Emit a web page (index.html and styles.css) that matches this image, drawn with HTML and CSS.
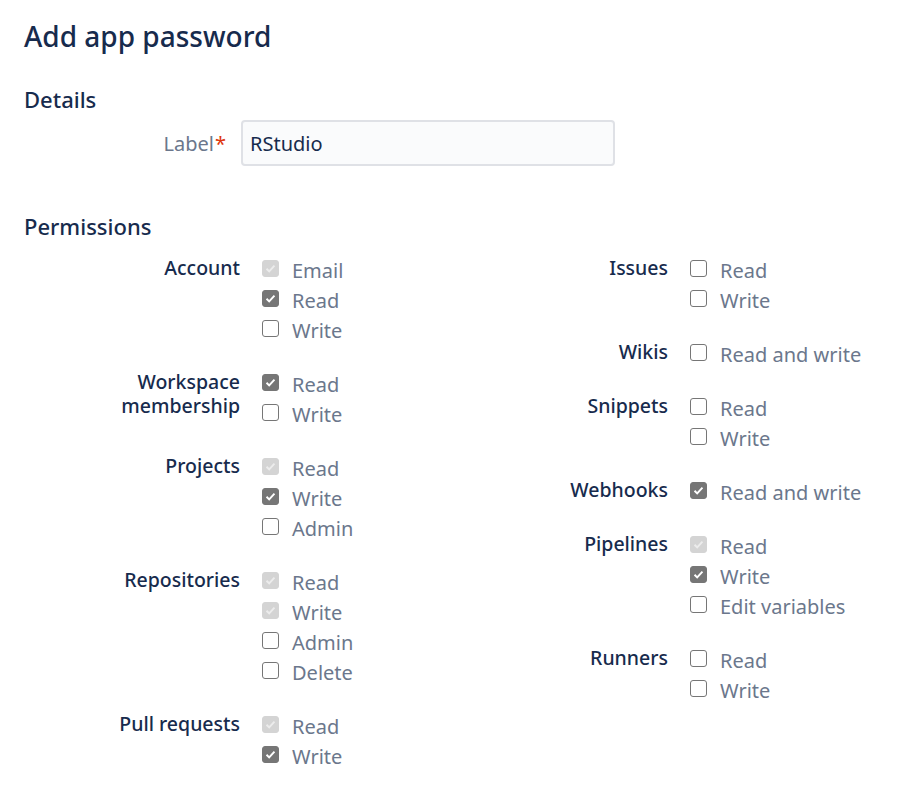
FILE: index.html
```html
<!DOCTYPE html>
<html lang="en">
<head>
<meta charset="utf-8">
<title>Add app password</title>
<link rel="stylesheet" href="styles.css">
</head>
<body>
<main class="page">
  <h1 class="title">Add app password</h1>
  <h2 class="section">Details</h2>
  <div class="field">
    <label class="field-label" for="label">Label<span class="req">*</span></label>
    <input class="text-input" id="label" type="text" value="RStudio">
  </div>
  <h2 class="section section-perm">Permissions</h2>
  <div class="perms">
    <div class="col">
      <div class="group">
        <div class="group-label">Account</div>
        <div class="opts">
          <label class="opt"><input type="checkbox" class="cb" checked disabled><span>Email</span></label>
          <label class="opt"><input type="checkbox" class="cb" checked><span>Read</span></label>
          <label class="opt"><input type="checkbox" class="cb"><span>Write</span></label>
        </div>
      </div>
      <div class="group">
        <div class="group-label">Workspace<br>membership</div>
        <div class="opts">
          <label class="opt"><input type="checkbox" class="cb" checked><span>Read</span></label>
          <label class="opt"><input type="checkbox" class="cb"><span>Write</span></label>
        </div>
      </div>
      <div class="group">
        <div class="group-label">Projects</div>
        <div class="opts">
          <label class="opt"><input type="checkbox" class="cb" checked disabled><span>Read</span></label>
          <label class="opt"><input type="checkbox" class="cb" checked><span>Write</span></label>
          <label class="opt"><input type="checkbox" class="cb"><span>Admin</span></label>
        </div>
      </div>
      <div class="group">
        <div class="group-label">Repositories</div>
        <div class="opts">
          <label class="opt"><input type="checkbox" class="cb" checked disabled><span>Read</span></label>
          <label class="opt"><input type="checkbox" class="cb" checked disabled><span>Write</span></label>
          <label class="opt"><input type="checkbox" class="cb"><span>Admin</span></label>
          <label class="opt"><input type="checkbox" class="cb"><span>Delete</span></label>
        </div>
      </div>
      <div class="group">
        <div class="group-label">Pull requests</div>
        <div class="opts">
          <label class="opt"><input type="checkbox" class="cb" checked disabled><span>Read</span></label>
          <label class="opt"><input type="checkbox" class="cb" checked><span>Write</span></label>
        </div>
      </div>
    </div>
    <div class="col">
      <div class="group">
        <div class="group-label">Issues</div>
        <div class="opts">
          <label class="opt"><input type="checkbox" class="cb"><span>Read</span></label>
          <label class="opt"><input type="checkbox" class="cb"><span>Write</span></label>
        </div>
      </div>
      <div class="group">
        <div class="group-label">Wikis</div>
        <div class="opts">
          <label class="opt"><input type="checkbox" class="cb"><span>Read and write</span></label>
        </div>
      </div>
      <div class="group">
        <div class="group-label">Snippets</div>
        <div class="opts">
          <label class="opt"><input type="checkbox" class="cb"><span>Read</span></label>
          <label class="opt"><input type="checkbox" class="cb"><span>Write</span></label>
        </div>
      </div>
      <div class="group">
        <div class="group-label">Webhooks</div>
        <div class="opts">
          <label class="opt"><input type="checkbox" class="cb" checked><span>Read and write</span></label>
        </div>
      </div>
      <div class="group">
        <div class="group-label">Pipelines</div>
        <div class="opts">
          <label class="opt"><input type="checkbox" class="cb" checked disabled><span>Read</span></label>
          <label class="opt"><input type="checkbox" class="cb" checked><span>Write</span></label>
          <label class="opt"><input type="checkbox" class="cb"><span>Edit variables</span></label>
        </div>
      </div>
      <div class="group">
        <div class="group-label">Runners</div>
        <div class="opts">
          <label class="opt"><input type="checkbox" class="cb"><span>Read</span></label>
          <label class="opt"><input type="checkbox" class="cb"><span>Write</span></label>
        </div>
      </div>
    </div>
  </div>
</main>
</body>
</html>
```
FILE: styles.css
```css
* { box-sizing: border-box; }
html, body { margin: 0; padding: 0; background: #fff; }
body {
  font-family: "Noto Sans", "Open Sans", sans-serif;
  color: #172B4D;
  -webkit-font-smoothing: antialiased;
}
.page { padding: 0 24px; }
.title {
  margin: 18px 0 0;
  font-size: 28px;
  line-height: 36px;
  font-weight: 500;
  color: #172B4D;
}
.section {
  margin: 31px 0 0;
  font-size: 22px;
  line-height: 28px;
  font-weight: 500;
  color: #172B4D;
}
.section-perm { margin-top: 46px; }
.field {
  display: grid;
  grid-template-columns: 202px 374px;
  column-gap: 15px;
  align-items: center;
  margin-top: 7px;
}
.field-label {
  text-align: right;
  font-size: 20px;
  color: #6B778C;
}
.req { color: #DE350B; margin-left: 1px; }
.text-input {
  height: 46px;
  width: 374px;
  border: 2px solid #DFE1E6;
  border-radius: 4px;
  background: #FAFBFC;
  padding: 0 7px;
  font-family: inherit;
  font-size: 20px;
  color: #172B4D;
  outline: none;
}
.perms {
  display: grid;
  grid-template-columns: 428px 1fr;
  margin-top: 14px;
}
.col { display: flex; flex-direction: column; gap: 24px; }
.group {
  display: grid;
  grid-template-columns: 216px 1fr;
  column-gap: 22px;
}
.group-label {
  text-align: right;
  font-size: 19.5px;
  line-height: 24px;
  padding-top: 2px;
  font-weight: 500;
  color: #172B4D;
}
.opts { display: flex; flex-direction: column; }
.opt {
  display: flex;
  align-items: center;
  gap: 13px;
  height: 30px;
  font-size: 20px;
  color: #6B778C;
}
.opt span { position: relative; top: 1px; }
.cb {
  appearance: none;
  -webkit-appearance: none;
  margin: 0;
  width: 17px;
  height: 17px;
  border: 1.5px solid #767676;
  border-radius: 3px;
  background: #fff;
  flex: none;
  position: relative;
  top: -1px;
}
.cb:checked {
  background: #767676 url("data:image/svg+xml,%3Csvg xmlns='http://www.w3.org/2000/svg' viewBox='0 0 17 17'%3E%3Cpath d='M4 8.8l3 3 6-6.6' fill='none' stroke='%23fff' stroke-width='2.2'/%3E%3C/svg%3E") center/100% no-repeat;
  border-color: #767676;
}
.cb:checked:disabled {
  background: #D4D4D4 url("data:image/svg+xml,%3Csvg xmlns='http://www.w3.org/2000/svg' viewBox='0 0 17 17'%3E%3Cpath d='M4 8.8l3 3 6-6.6' fill='none' stroke='%23ececec' stroke-width='2.2'/%3E%3C/svg%3E") center/100% no-repeat;
  border-color: #D4D4D4;
}
```
